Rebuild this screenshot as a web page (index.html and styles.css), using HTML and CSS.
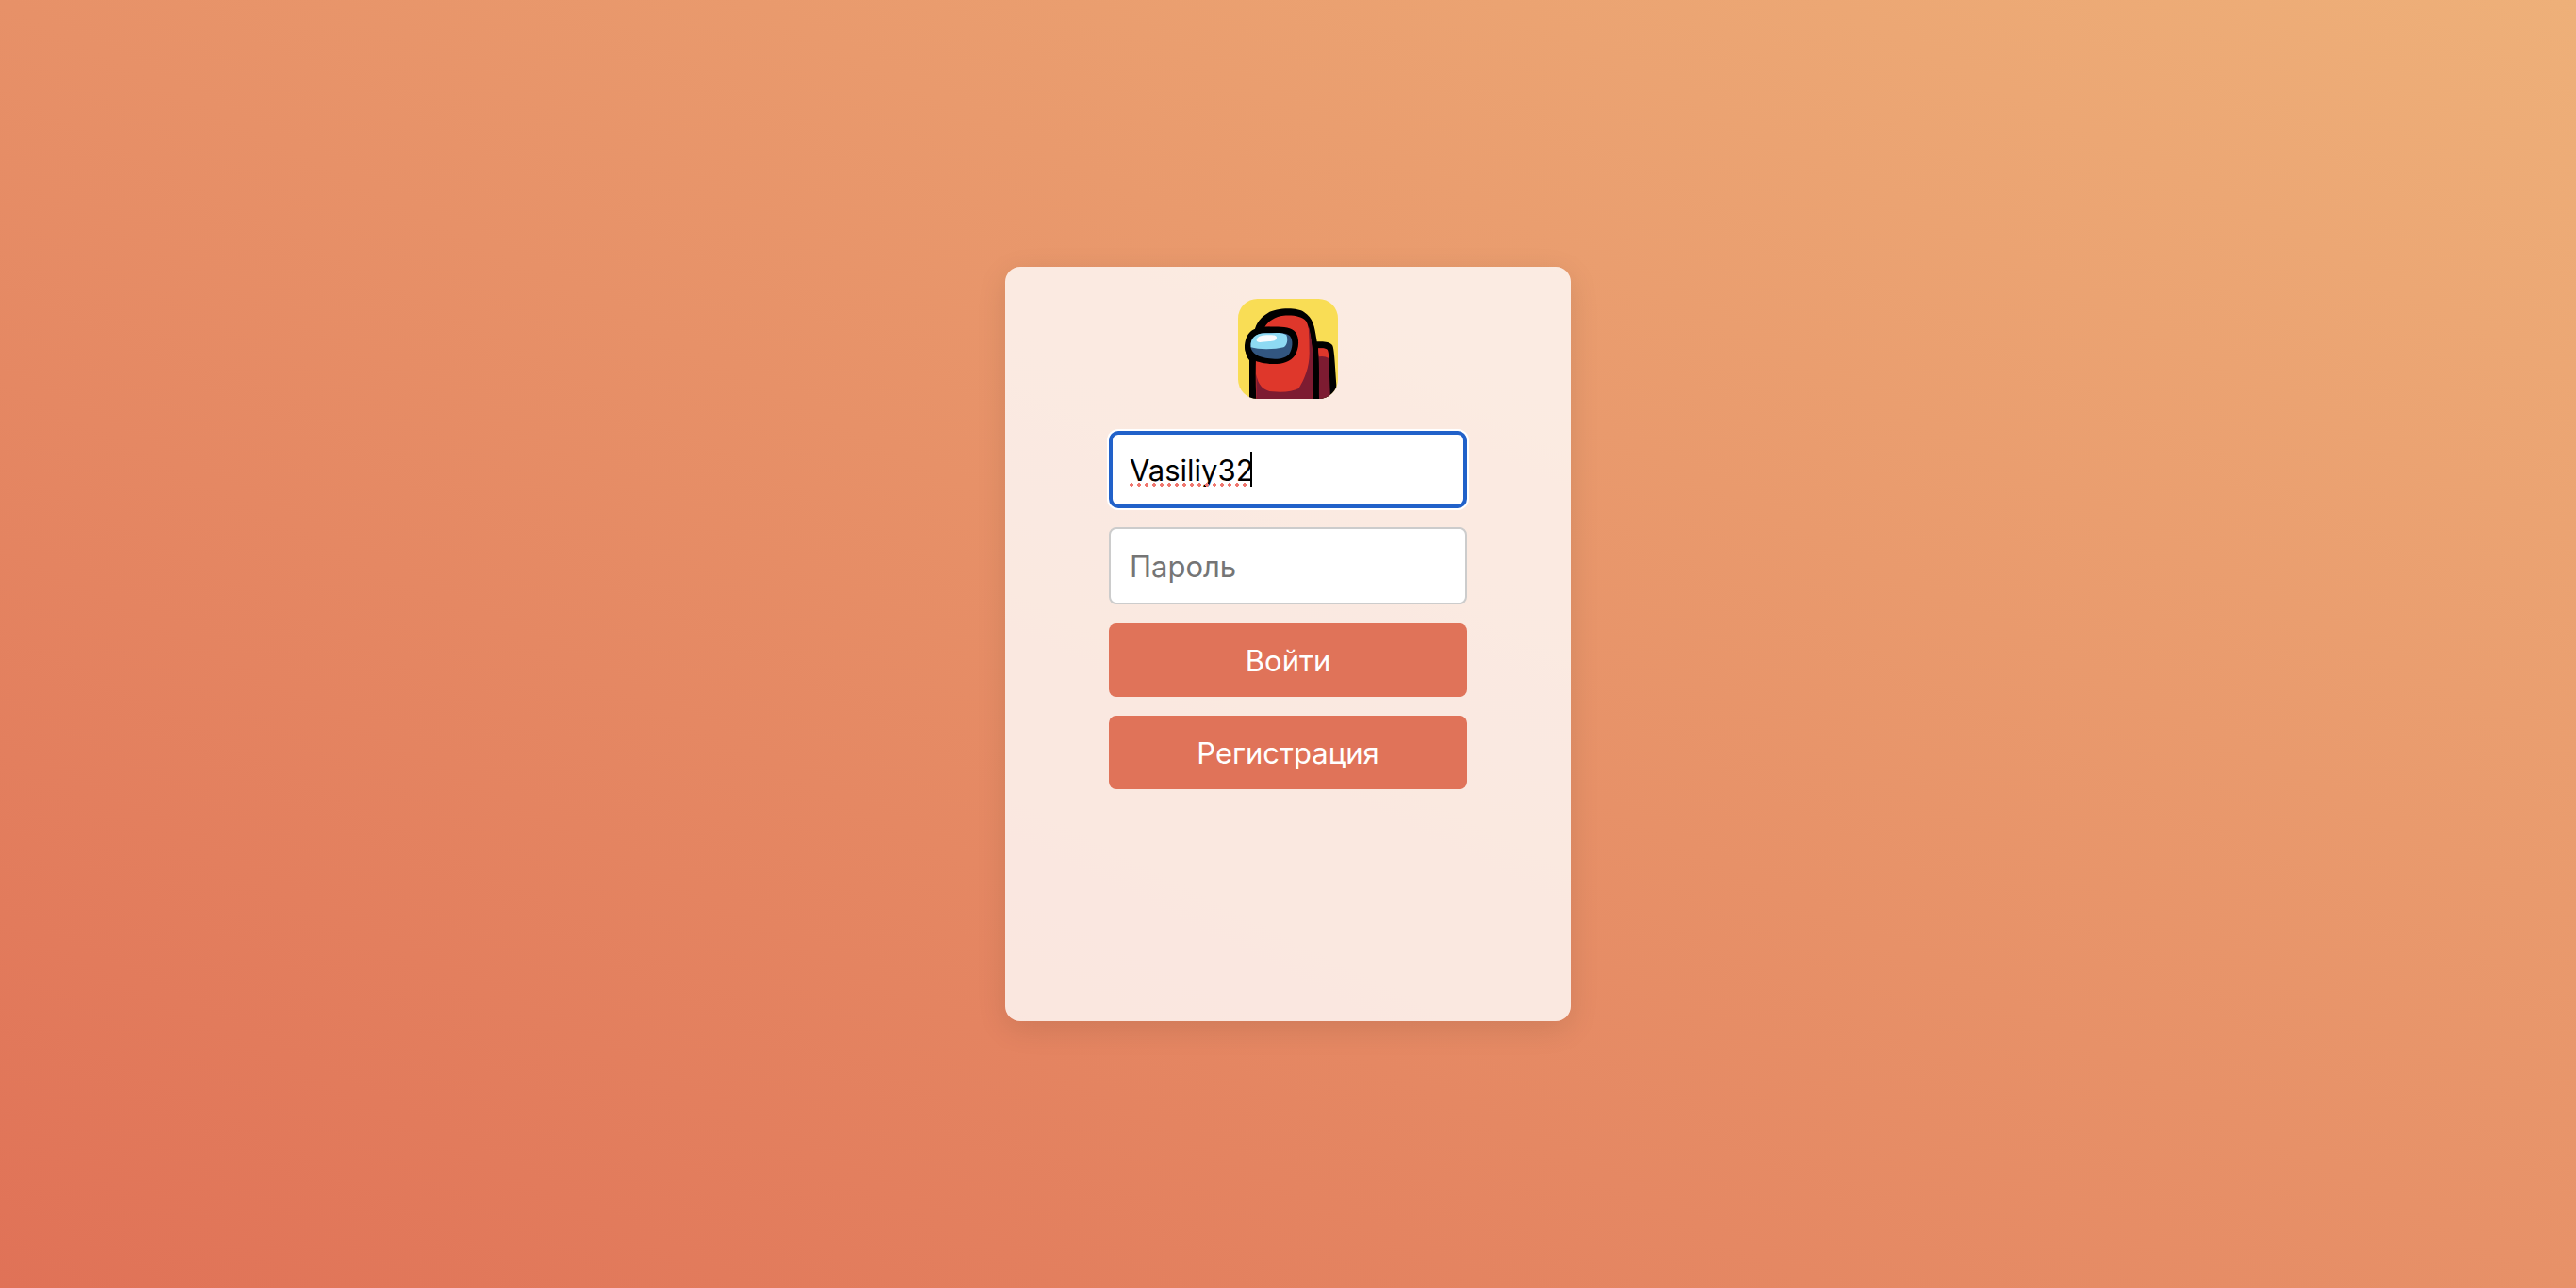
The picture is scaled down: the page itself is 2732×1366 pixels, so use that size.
FILE: index.html
```html
<!DOCTYPE html>
<html lang="ru">
<head>
<meta charset="utf-8">
<meta name="viewport" content="width=device-width, initial-scale=1">
<title>Вход</title>
<link rel="stylesheet" href="styles.css">
</head>
<body>
<main class="page">
  <form class="card">
    <svg class="logo" viewBox="39 51 318 318" aria-hidden="true">
      <defs><clipPath id="tile"><rect x="39" y="51" width="318" height="318" rx="62"/></clipPath></defs>
      <g clip-path="url(#tile)">
        <rect x="39" y="51" width="318" height="318" fill="#f9dd55"/>
        <path d="M288 187C310 186 330 186 339 198C347 210 348 290 356 369H288Z" fill="#000"/>
        <path d="M294 208C308 207 320 208 324 214C328 224 330 290 333 369H297Z" fill="#7d1b31"/>
        <path d="M294 208C308 207 320 208 324 214Q327 222 328 240Q313 231 296 235Z" fill="#df372b"/>
        <path d="M75 380V246C58 230 57 184 76 164C81 157 88 152 92 151C96 130 112 108 134 96C158 80 226 76 249 93C278 111 283 140 289 180C297 230 300 290 293 380Z" fill="#000"/>
        <path d="M97 380Q94 300 96 240L140 140H124C136 122 155 107 184 104C216 102 242 106 256 122C266 140 276 200 277 240Q279 310 274 380Z" fill="#df372b"/>
        <path d="M97 380V290C102 325 120 344 150 346Q205 350 232 336C252 305 267 265 266 220Q266 180 263 136C270 160 276 200 277 240Q279 310 274 380Z" fill="#7d1b31"/>
        <path d="M60 205C61 160 86 141 122 140C165 139 207 137 221 156C236 175 234 208 220 231C204 254 175 260 140 258C92 254 60 237 60 205Z" fill="#000"/>
        <path d="M79 203C78 174 96 161 126 160C160 159 192 156 204 169C216 184 212 210 203 224C193 240 167 244 140 241C104 237 82 224 79 203Z" fill="#325680"/>
        <path d="M80 205C77 176 94 161 126 160C154 160 180 156 193 166C199 182 195 200 184 205C158 212 105 213 80 205Z" fill="#8edaf3"/>
        <path d="M98 180C102 169 118 166 136 166C151 166 162 166 162 174C162 183 151 186 138 186C118 187 96 194 98 180Z" fill="#f7fbfe"/>
      </g>
    </svg>
    <div class="field field-active">
      <input class="input" id="login" type="text" value="Vasiliy32" aria-label="Логин" placeholder="Логин" spellcheck="false">
      <span class="spelling" aria-hidden="true"></span>
    </div>
    <div class="field">
      <input class="input" id="password" type="password" aria-label="Пароль" placeholder="Пароль">
    </div>
    <button class="button" type="submit">Войти</button>
    <button class="button" type="button">Регистрация</button>
  </form>
</main>
</body>
</html>
```
FILE: styles.css
```css
* {
  box-sizing: border-box;
}

body {
  margin: 0;
  font-family: Inter, "Liberation Sans", sans-serif;
  font-size: 31px;
}

.page {
  display: flex;
  align-items: center;
  justify-content: center;
  min-height: 100vh;
  background: linear-gradient(to top right, #e07257, #eeb079);
}

.card {
  display: flex;
  flex-direction: column;
  align-items: center;
  gap: 20px;
  width: 600px;
  max-width: 100%;
  min-height: 800px;
  padding: 34px 110px;
  border-radius: 16px;
  background: rgba(255, 255, 255, 0.8);
  box-shadow: 0 8px 32px rgba(0, 0, 0, 0.1);
}

.logo {
  width: 106px;
  height: 106px;
  margin-bottom: 14px;
}

.field {
  position: relative;
  width: 100%;
}

.input {
  display: block;
  width: 100%;
  height: 82px;
  padding: 0 20px;
  border: 2px solid #ccc;
  border-radius: 8px;
  background: #fff;
  color: #000;
  font: inherit;
}

.input::placeholder {
  color: #757575;
}

.field-active .input,
.input:focus {
  padding: 0 18px;
  border: 4px solid #2161c9;
  border-radius: 10px;
  outline: none;
  box-shadow: 0 0 0 2px #fff;
}

/* Spell-check dots under the login, with the text caret at their end */
.spelling {
  position: absolute;
  left: 22px;
  top: 22px;
  width: 130px;
  height: 38px;
  border-right: 2px solid #000;
  background: radial-gradient(circle at 2px 2px, #f0776f 2px, transparent 2px) 0 33px / 8px 4px repeat-x;
  pointer-events: none;
}

.button {
  width: 100%;
  height: 78px;
  padding: 0 20px;
  border: 0;
  border-radius: 8px;
  background: #e07359;
  color: #fff;
  font: inherit;
  cursor: pointer;
}
```
